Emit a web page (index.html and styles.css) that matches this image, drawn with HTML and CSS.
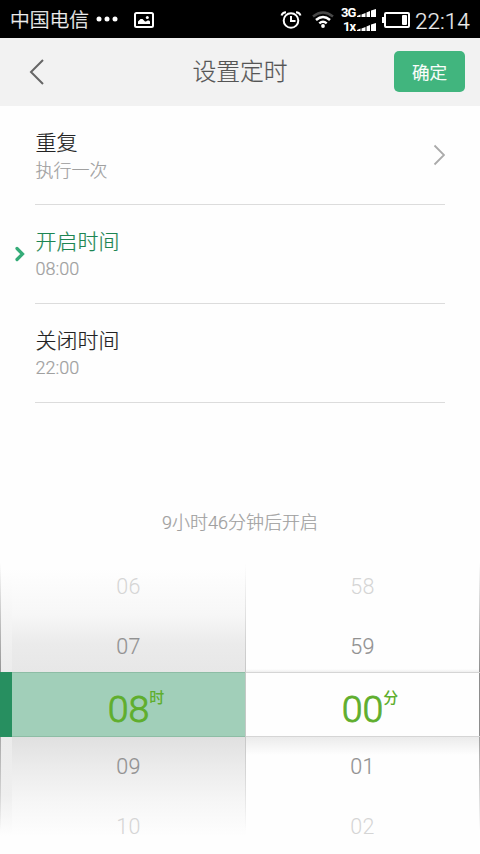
FILE: index.html
```html
<!DOCTYPE html>
<html lang="zh-CN">
<head>
<meta charset="utf-8">
<title>设置定时</title>
<link rel="stylesheet" href="styles.css">
</head>
<body>
<div class="status">
  <span class="carrier">中国电信</span>
  <svg class="dots" width="22" height="6" fill="#fff"><circle cx="3" cy="3" r="2.5"/><circle cx="11" cy="3" r="2.5"/><circle cx="19" cy="3" r="2.5"/></svg>
  <svg class="photo" width="20" height="16"><rect x="1" y="1" width="18" height="14" rx="1.500" fill="none" stroke="#fff" stroke-width="2"/><path d="M4 12V9.500L6.500 7h2L11 9.500h1L13.500 8.500H15L16 9.500V12z" fill="#fff"/><circle cx="13.300" cy="5.500" r="1.500" fill="#fff"/></svg>
  <svg class="alarm" width="22" height="18" fill="none" stroke="#fff"><circle cx="11" cy="9.500" r="7.300" stroke-width="2"/><path d="M11 5v5h4.500" stroke-width="2"/><path d="M1.500 4.500Q2.500 1.300 6 1.300M20.500 4.500Q19.500 1.300 16 1.300" stroke-width="2"/></svg>
  <svg class="wifi" width="22" height="17" fill="none" stroke-width="2.500"><path d="M1 5.500Q11-2.500 21 5.500" stroke="#484848"/><path d="M4 9Q11 3 18 9M7.300 12.400Q11 9.200 14.700 12.400" stroke="#fff"/><circle cx="11" cy="15" r="1.900" fill="#fff"/></svg>
  <div class="signals">
    <div class="signal"><span class="net">3G</span><svg width="19" height="10" fill="#fff"><path d="M0 8l3.500-1.500V9H0zM4.500 6.500l4-1.500v4h-4zM9.500 4.500L13 3v6H9.500zM14 2.500L19 1v8h-5z"/></svg></div>
    <div class="signal"><span class="net">1x</span><svg width="19" height="10" fill="#fff"><path d="M0 8l3.500-1.500V9H0zM4.500 6.500l4-1.500v4h-4zM9.500 4.500L13 3v6H9.500zM14 2.500L19 1v8h-5z"/></svg></div>
  </div>
  <svg class="battery" width="28" height="16"><rect x="3" y="1" width="24" height="14" rx="1" fill="none" stroke="#fff" stroke-width="2"/><path d="M0 5h3v6H0z" fill="#fff"/><rect x="20" y="3" width="5" height="10" rx="1" fill="#fff"/></svg>
  <span class="clock">22:14</span>
</div>
<header class="header">
  <svg class="back" width="16" height="28" fill="none" stroke="#666" stroke-width="2"><path d="M14 2L2 14L14 26"/></svg>
  <h1 class="title">设置定时</h1>
  <button class="confirm">确定</button>
</header>
<main>
  <div class="row">
    <div><div class="name">重复</div><div class="value">执行一次</div></div>
    <svg class="more" width="12" height="22" fill="none" stroke="#aaa" stroke-width="1.800"><path d="M1.500 1.500L11 11L1.500 20.500"/></svg>
  </div>
  <div class="row active">
    <svg class="marker" width="10" height="16" fill="none" stroke="#35ac78" stroke-width="3.200" stroke-linecap="round"><path d="M2 2.500L7.500 8L2 13.500"/></svg>
    <div><div class="name">开启时间</div><div class="value time">08:00</div></div>
  </div>
  <div class="row">
    <div><div class="name">关闭时间</div><div class="value time">22:00</div></div>
  </div>
  <p class="hint">9小时46分钟后开启</p>
  <div class="picker">
    <div class="wheel hours">
      <div class="above"><span class="far">06</span><span class="near">07</span></div>
      <div class="selected"><span class="digits">08</span><span class="unit">时</span></div>
      <div class="below"><span class="near">09</span><span class="far">10</span></div>
    </div>
    <div class="wheel minutes">
      <div class="above"><span class="far">58</span><span class="near">59</span></div>
      <div class="selected"><span class="digits">00</span><span class="unit">分</span></div>
      <div class="below"><span class="near">01</span><span class="far">02</span></div>
    </div>
  </div>
</main>
</body>
</html>
```
FILE: styles.css
```css
* { box-sizing: border-box; }
body {
  margin: 0;
  width: 480px;
  height: 854px;
  overflow: hidden;
  background: #fefefe;
  font-family: Roboto, "Noto Sans CJK SC", sans-serif;
}
svg { display: block; flex: none; }
.status {
  display: flex;
  align-items: center;
  height: 38px;
  padding: 0 10px;
  background: #000;
  color: #eee;
}
.carrier { width: 79px; padding-top: 3px; font-size: 19.8px; font-weight: 300; line-height: 35px; white-space: nowrap; -webkit-text-stroke: .4px; }
.dots { margin-left: 7px; }
.photo { margin: 2px 0 0 16px; }
.alarm { margin: 1px 0 0 126px; }
.wifi { margin-left: 10px; }
.signals { display: flex; flex-direction: column; gap: 2px; width: 35px; margin: 1px 0 0 7px; }
.signal { display: flex; height: 12px; align-items: center; }
.net { width: 16px; font: bold 13px/12px Roboto, sans-serif; letter-spacing: -1px; color: #fff; text-align: right; padding-right: 2px; }
.battery { margin: 2px 0 0 6px; }
.clock { margin: 3px 0 0 5px; font-size: 22.5px; font-weight: 300; line-height: 34px; white-space: nowrap; -webkit-text-stroke: .2px; }
.header {
  display: grid;
  grid-template-columns: 86px 1fr 86px;
  align-items: center;
  height: 68px;
  background: #f2f2f2;
}
.back { margin-left: 29px; }
.title { margin: 0; text-align: center; font-size: 23.8px; font-weight: 300; color: #555; line-height: 36px; -webkit-text-stroke: .2px; }
.confirm {
  width: 71px;
  height: 41px;
  margin-bottom: 1px;
  padding: 3px 0 0;
  border: 0;
  border-radius: 5px;
  background: #41b57e;
  color: #fff;
  font: 300 17.5px/38px Roboto, "Noto Sans CJK SC", sans-serif;
  -webkit-text-stroke: .4px;
}
.row {
  position: relative;
  display: flex;
  justify-content: space-between;
  height: 99px;
  margin: 0 35px;
  padding-top: 23px;
  border-bottom: 1px solid #dcdcdc;
}
.name { padding-left: .5px; font-size: 21px; font-weight: 300; line-height: 28px; color: #222; -webkit-text-stroke: .2px; }
.value { padding-left: .5px; font-size: 18px; font-weight: 300; line-height: 27px; color: #a0a0a0; -webkit-text-stroke: .2px; }
.time { line-height: 25px; }
.more { margin-top: 15px; }
.marker { position: absolute; left: -20px; top: 41px; }
.active .name { color: #1c8552; }
.hint { margin: 106px 0 0; text-align: center; font-size: 18px; font-weight: 300; line-height: 28px; color: #a0a0a0; -webkit-text-stroke: .2px; }
.picker {
  display: grid;
  grid-template-columns: 246px 234px;
  height: 297px;
  margin-top: 20px;
}
.wheel { display: grid; grid-template-rows: 115px 65px 117px; }
.above, .below { display: flex; flex-direction: column; align-items: center; font-size: 21.5px; font-weight: 300; letter-spacing: .3px; line-height: 60px; }
.near { flex: none; height: 60px; color: #919191; -webkit-text-stroke: .15px; }
.far { flex: none; height: 60px; color: #d5d5d5; }
.selected { display: flex; justify-content: center; color: #5fae2d; border: solid #d5d5d5; border-width: 1px 0; }
.digits { padding-top: 6px; font-size: 37.5px; font-weight: 300; line-height: 60px; -webkit-text-stroke: .9px; }
.unit { width: 15px; margin-right: -15px; padding-top: 15px; font-size: 15px; font-weight: 500; line-height: 20px; }
.hours > div { padding-left: 11px; }
.minutes > div { padding-right: 1px; }
.hours .above {
  background:
    linear-gradient(#fefefe00 5%, #959595) left / 1px 100% no-repeat,
    linear-gradient(#fefefe00 5%, #c8c8c8) right / 1px 100% no-repeat,
    linear-gradient(#fefefe 10%, #eee 85%, #ececec) left / 12px 100% no-repeat,
    linear-gradient(#fefefe 10%, #f7f7f7 50%, #ebebeb 75%, #e7e7e7);
}
.hours .below {
  background:
    linear-gradient(#a8a8a8, #fefefe00 80%) left / 1px 100% no-repeat,
    linear-gradient(#c8c8c8, #fefefe00 80%) right / 1px 100% no-repeat,
    linear-gradient(#ebebeb, #efefef 50%, #fefefe 85%) left / 12px 100% no-repeat,
    linear-gradient(#e0e0e0, #ebebeb 25%, #f6f6f6 55%, #fefefe 85%);
}
.hours .selected {
  border: 0;
  padding-top: 1px;
  background:
    linear-gradient(#278f60, #278f60) left / 12px 100% no-repeat,
    linear-gradient(#c4c9c6, #c4c9c6) right / 1px 100% no-repeat,
    linear-gradient(#8dbda5, #8dbda5) top / 100% 1px no-repeat,
    linear-gradient(#8dbda5, #8dbda5) bottom / 100% 1px no-repeat,
    #a1cfb9;
}
.minutes .above {
  background:
    linear-gradient(#fefefe00 5%, #8d8d8d) right / 1px 100% no-repeat,
    linear-gradient(#fefefe00, #efefef) bottom / 100% 3px no-repeat;
}
.minutes .selected { background: linear-gradient(#8d8d8d, #8d8d8d) right / 1px 100% no-repeat; }
.minutes .below {
  background:
    linear-gradient(#a0a0a0, #fefefe00 80%) right / 1px 100% no-repeat,
    linear-gradient(#ebebeb, #fefefe00) top / 100% 18px no-repeat;
}
```
